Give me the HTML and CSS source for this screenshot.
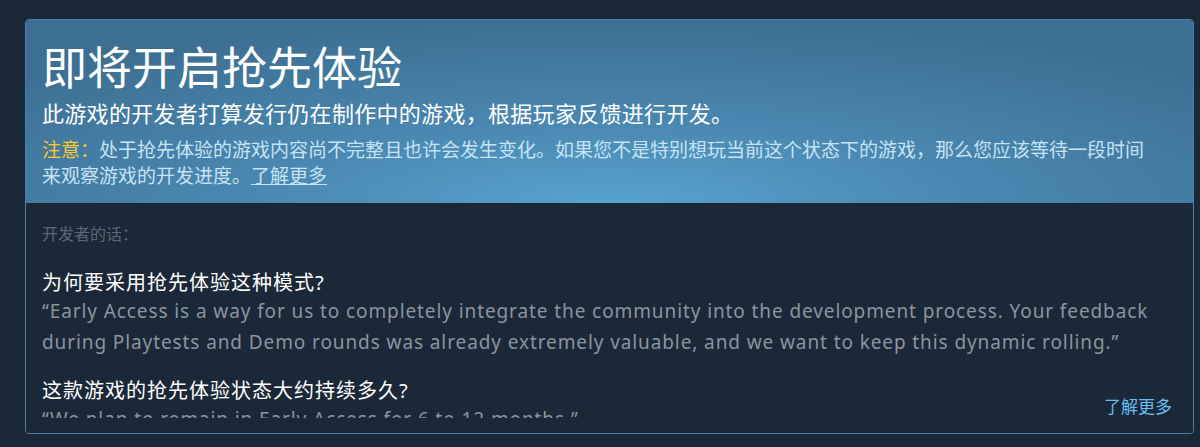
FILE: index.html
```html
<!DOCTYPE html>
<html lang="zh-CN">
<head>
<meta charset="UTF-8">
<meta name="viewport" content="width=device-width, initial-scale=1.0">
<title>即将开启抢先体验</title>
<link rel="stylesheet" href="styles.css">
</head>
<body>
<div class="ea-box">
  <div class="ea-header">
    <h1>即将开启抢先体验</h1>
    <p class="ea-subtitle">此游戏的开发者打算发行仍在制作中的游戏，根据玩家反馈进行开发。</p>
    <p class="ea-notice"><span class="ea-warn">注意：</span>处于抢先体验的游戏内容尚不完整且也许会发生变化。如果您不是特别想玩当前这个状态下的游戏，那么您应该等待一段时间来观察游戏的开发进度。<a href="#">了解更多</a></p>
  </div>
  <div class="ea-body">
    <div class="ea-content">
      <div class="dev-label">开发者的话：</div>
      <div class="qa">
        <h3>为何要采用抢先体验这种模式?</h3>
        <p>“Early Access is a way for us to completely integrate the community into the development process. Your feedback during Playtests and Demo rounds was already extremely valuable, and we want to keep this dynamic rolling.”</p>
      </div>
      <div class="qa">
        <h3>这款游戏的抢先体验状态大约持续多久?</h3>
        <p>“We plan to remain in Early Access for 6 to 12 months.”</p>
      </div>
    </div>
    <a class="read-more" href="#">了解更多</a>
  </div>
</div>
</body>
</html>
```

FILE: styles.css
```css
body {
  margin: 0;
  background-color: #1b2838;
  font-family: "Noto Sans", "Noto Sans CJK SC", sans-serif;
}
.ea-box {
  margin: 19px 6px 0 25px;
  border: 1px solid #4a7fa8;
  border-radius: 4px;
  overflow: hidden;
}
.ea-header {
  height: 183px;
  box-sizing: border-box;
  padding: 20px 40px 0 16px;
  background: radial-gradient(ellipse 70% 100% at 50% 100%, #57a3cf 0%, #4a87b0 45%, #3d6f93 100%);
  color: #fff;
}
.ea-header h1 {
  margin: 0;
  font-size: 45px;
  font-weight: 400;
  line-height: 56px;
}
.ea-subtitle {
  margin: 3px 0 10px 0;
  font-size: 22px;
  letter-spacing: 0.3px;
  line-height: 28px;
}
.ea-notice {
  margin: 0;
  font-size: 19px;
  line-height: 26px;
  color: #c6e4f5;
}
.ea-warn {
  color: #ffc82c;
}
.ea-notice a {
  color: #c6e4f5;
  text-decoration: underline;
}
.ea-body {
  position: relative;
  height: 230px;
  box-sizing: border-box;
  padding: 20px 16px 0 16px;
  background-color: #1b2838;
}
.ea-content {
  height: 195px;
  overflow: hidden;
}
.dev-label {
  font-size: 16px;
  line-height: 22px;
  color: #5c6873;
  margin-bottom: 25px;
}
.qa h3 {
  margin: 0;
  font-size: 20px;
  font-weight: 400;
  letter-spacing: 1px;
  line-height: 26px;
  color: #fff;
}
.qa p {
  margin: 0 0 20px 0;
  font-size: 19px;
  letter-spacing: 0.9px;
  line-height: 31px;
  color: #8b959e;
}
.read-more {
  position: absolute;
  right: 21px;
  bottom: 15px;
  font-size: 17px;
  color: #66c0f4;
  text-decoration: none;
}
```
